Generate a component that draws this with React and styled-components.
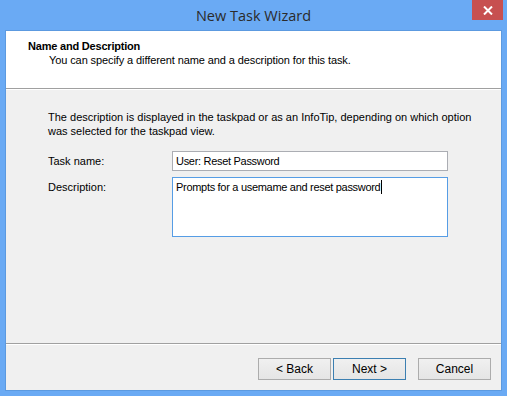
import React from 'react'
import styled, { createGlobalStyle } from 'styled-components';

const GlobalStyle = createGlobalStyle`
    html, body {
        margin:0;
        padding:0;
        background:#6aaaf4;
    }
    body{
        font-family:"Liberation Sans", Arial, sans-serif;
        font-size:11px;
        color:#000;
    }
`

function App() {
  return (
    <>
        <GlobalStyle />
        <Window>
            <TitleBar>
                <Title>New Task Wizard</Title>
                <CloseButton type='button' aria-label='Close'>
                    <svg width="10" height="9" viewBox="0 0 10 9">
                        <path d="M1 0.5 L9 8.5 M9 0.5 L1 8.5" stroke="#fff" strokeWidth="2" />
                    </svg>
                </CloseButton>
            </TitleBar>
            <Client>
                <Header>
                    <HeaderTitle>Name and Description</HeaderTitle>
                    <HeaderSub>You can specify a different name and a description for this task.</HeaderSub>
                </Header>
                <Body>
                    <Intro>
                        The description is displayed in the taskpad or as an InfoTip, depending on which option was selected for the taskpad view.
                    </Intro>
                    <Form>
                        <Label>Task name:</Label>
                        <Field>User: Reset Password</Field>
                        <Label>Description:</Label>
                        <Field $tall $focused>
                            Prompts for a usemame and reset password<Caret />
                        </Field>
                    </Form>
                </Body>
                <Footer>
                    <Button type='button'>&lt; Back</Button>
                    <Button type='button' $default>Next &gt;</Button>
                    <Button type='button' $apart>Cancel</Button>
                </Footer>
            </Client>
        </Window>
    </>
  )
}

export default App;

const Window = styled.div`
    width:507px;
    height:396px;
    display:flex;
    flex-direction:column;
    box-sizing:border-box;
    padding:0 5px 5px 5px;
`
const TitleBar = styled.div`
    height:30px;
    flex:none;
    display:flex;
    align-items:center;
    justify-content:center;
    position:relative;
`
const Title = styled.div`
    font-family:"Open Sans", "Liberation Sans", sans-serif;
    font-size:14.5px;
    color:#2b2b2b;
`
const CloseButton = styled.button`
    position:absolute;
    top:0;
    right:-1px;
    width:31px;
    height:20px;
    border:none;
    padding:0;
    background:#c75050;
    display:flex;
    align-items:center;
    justify-content:center;
`
const Client = styled.div`
    flex:1;
    display:flex;
    flex-direction:column;
    background:#f0f0f0;
    border:1px solid #5c9ae0;
`
const Header = styled.div`
    height:58px;
    flex:none;
    background:#fff;
    border-bottom:1px solid #a0a0a0;
    box-shadow:0 1px 0 #fff;
    padding:9px 0 0 22px;
    box-sizing:border-box;
`
const HeaderTitle = styled.div`
    font-weight:bold;
    font-size:11px;
    line-height:13px;
    letter-spacing:-0.2px;
`
const HeaderSub = styled.div`
    padding-left:21px;
    line-height:13px;
    margin-top:1px;
    letter-spacing:-0.1px;
`
const Body = styled.div`
    flex:1;
    padding:21px 8px 0 42px;
    border-bottom:1px solid #a0a0a0;
    box-shadow:0 1px 0 #fff;
`
const Intro = styled.p`
    margin:0;
    line-height:14px;
    max-width:440px;
`
const Form = styled.div`
    margin-top:13px;
    display:grid;
    grid-template-columns:124px 276px;
    row-gap:6px;
`
const Label = styled.div`
    line-height:14px;
    padding-top:3px;
`
const Field = styled.div`
    height:${p => p.$tall ? '60px' : '20px'};
    box-sizing:border-box;
    background:#fff;
    border:1px solid ${p => p.$focused ? '#569de5' : '#abadb3'};
    padding:2px 3px;
    line-height:14px;
    font-size:11px;
    letter-spacing:-0.3px;
    color:#000;
`
const Caret = styled.span`
    display:inline-block;
    width:1px;
    height:14px;
    margin-left:1px;
    background:#000;
    vertical-align:top;
`
const Footer = styled.div`
    height:46px;
    flex:none;
    display:flex;
    align-items:flex-start;
    justify-content:flex-end;
    padding:14px 10px 0 0;
    box-sizing:border-box;
`
const Button = styled.button`
    width:73px;
    height:22px;
    margin-left:${p => p.$apart ? '12px' : '2px'};
    border:1px solid ${p => p.$default ? '#3c7fb1' : '#acacac'};
    background:linear-gradient(#f0f0f0, #e5e5e5);
    font-family:"Liberation Sans", Arial, sans-serif;
    font-size:12px;
    color:#000;
    padding:0;
`
